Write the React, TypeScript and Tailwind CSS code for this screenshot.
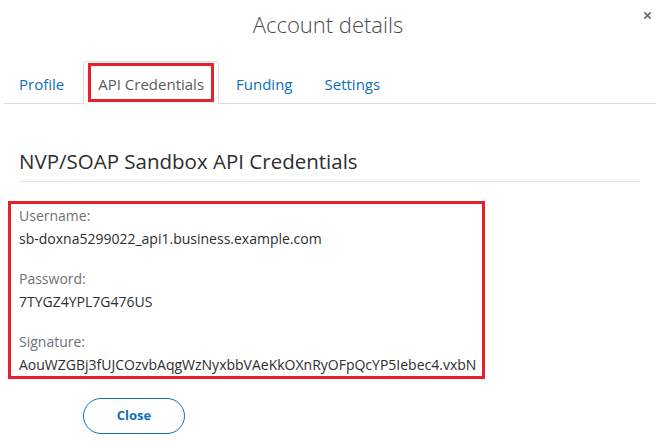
import React from "react";

interface Field {
  label: string;
  value: string;
}

const fields: Field[] = [
  { label: "Username:", value: "sb-doxna5299022_api1.business.example.com" },
  { label: "Password:", value: "7TYGZ4YPL7G476US" },
  { label: "Signature:", value: "AouWZGBj3fUJCOzvbAqgWzNyxbbVAeKkOXnRyOFpQcYP5Iebec4.vxbN" },
];

const tabs = ["Profile", "API Credentials", "Funding", "Settings"];

const App: React.FC = () => {
  const active = "API Credentials";

  return (
    <div className="relative w-[656px] h-[441px] bg-white overflow-hidden font-['Open_Sans',sans-serif]">
      {/* Close icon */}
      <button className="absolute right-[3px] top-[10px] w-[10px] h-[10px] text-[#6b7178]">
        <svg viewBox="0 0 10 10" className="w-[9px] h-[9px]" fill="none" stroke="currentColor" strokeWidth="2">
          <path d="M1.5 1.5 L8.5 8.5 M8.5 1.5 L1.5 8.5" />
        </svg>
      </button>

      {/* Title */}
      <div className="pt-[8px] text-center text-[22px] leading-[32px] font-light text-[#4a4a4a]">
        Account details
      </div>

      {/* Tabs */}
      <div className="mt-[22px] ml-[4px] flex items-end gap-[2px] border-b border-[#dcdcdc] h-[42px]">
        {tabs.map((tab) =>
          tab === active ? (
            <div
              key={tab}
              className="h-[43px] -mb-px px-[4px] pt-[1px] bg-white border border-b-0 border-[#dcdcdc] rounded-t-[4px]"
            >
              <div className="h-[39px] px-[7px] pt-[3px] flex items-center border-[3px] border-[#e8202a] text-[15px] text-[#5b5b5b]">
                {tab}
              </div>
            </div>
          ) : (
            <div
              key={tab}
              className={`h-[42px] ${tab === "Profile" ? "pl-[15px] pr-[17px]" : "px-[15px]"} pt-[4px] flex items-center text-[15px] text-[#0e6fb8]`}
            >
              {tab}
            </div>
          )
        )}
      </div>

      {/* Content */}
      <div className="px-[19px] pt-[43px]">
        <h2 className="text-[20.5px] leading-[28px] text-[#2c2e2f] pb-[6px] border-b border-[#e6e6e6] w-[621px]">
          NVP/SOAP Sandbox API Credentials
        </h2>
      </div>

      <div className="mt-[19px] ml-[8px] w-[477px] border-[3px] border-[#e8202a] pl-[8px] pt-0 pb-0">
        {fields.map((f, i) => (
          <div key={f.label} className={i > 0 ? "mt-[17px]" : ""}>
            <div className="text-[14px] leading-[23px] text-[#6c7378]">{f.label}</div>
            <div className="text-[14px] leading-[23px] text-[#2c2e2f]">{f.value}</div>
          </div>
        ))}
      </div>

      <div className="mt-[19px] ml-[83px]">
        <button className="w-[102px] h-[36px] rounded-full border-[1.5px] border-[#0e6fb8] text-[#0e6fb8] text-[13px] font-bold">
          Close
        </button>
      </div>
    </div>
  );
};

export default App;
